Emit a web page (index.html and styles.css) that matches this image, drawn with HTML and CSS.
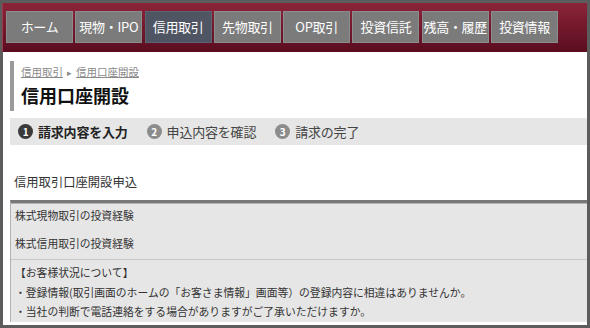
FILE: index.html
```html
<!DOCTYPE html>
<html lang="ja">
<head>
    <meta charset="UTF-8">
    <meta name="viewport" content="width=device-width, initial-scale=1.0">
    <title>信用口座開設</title>
    <link rel="stylesheet" href="styles.css">
</head>
<body>
    <div class="frame">
        <div class="header">
            <a class="tab">ホーム</a>
            <a class="tab">現物・IPO</a>
            <a class="tab active">信用取引</a>
            <a class="tab">先物取引</a>
            <a class="tab">OP取引</a>
            <a class="tab">投資信託</a>
            <a class="tab">残高・履歴</a>
            <a class="tab">投資情報</a>
        </div>

        <div class="content">
            <div class="page-title">
                <div class="crumbs">
                    <a>信用取引</a><span class="arrow">&#9656;</span><a>信用口座開設</a>
                </div>
                <h1>信用口座開設</h1>
            </div>

            <div class="steps">
                <div class="step current"><span class="num">1</span>請求内容を入力</div>
                <div class="step"><span class="num">2</span>申込内容を確認</div>
                <div class="step"><span class="num">3</span>請求の完了</div>
            </div>

            <div class="section-title">信用取引口座開設申込</div>

            <div class="form-table">
                <div class="row">株式現物取引の投資経験</div>
                <div class="row last">株式信用取引の投資経験</div>
                <div class="notice">
                    <p>【お客様状況について】</p>
                    <p>・登録情報(取引画面のホームの「お客さま情報」画面等）の登録内容に相違はありませんか。</p>
                    <p>・当社の判断で電話連絡をする場合がありますがご了承いただけますか。</p>
                </div>
            </div>
        </div>
    </div>
</body>
</html>
```
FILE: styles.css
```css
:root {
    --frame: #5c5c5c;
    --text: #333;
    --panel: #e6e6e6;
    --tab: #7b7b7b;
    --tab-active: #4f5563;
}
html, body {
    margin: 0;
    height: 100%;
}
body {
    font-family: "Noto Sans CJK JP", "Noto Sans", sans-serif;
    background: var(--frame);
    color: var(--text);
    overflow: hidden;
}
.frame {
    padding: 3px 3px 3px 2px;
    height: 100%;
    box-sizing: border-box;
    display: flex;
    flex-direction: column;
}
.header {
    display: flex;
    gap: 2.3px;
    padding: 8px 0 9px 3px;
    background: linear-gradient(#8c2439, #5a0d20);
    border-left: 1px solid #9a3a4c;
}
.tab {
    width: 67px;
    height: 32px;
    box-sizing: border-box;
    background: var(--tab);
    border: 1px solid #8d8d8d;
    color: #fff;
    font-size: 13px;
    line-height: 29px;
    text-align: center;
    white-space: nowrap;
    letter-spacing: -0.3px;
}
.tab.active {
    background: var(--tab-active);
    border-color: #5d6372;
}
.content {
    flex: 1;
    background: #fff;
    margin-left: 1px;
    padding-top: 9px;
    overflow: hidden;
}
.page-title {
    margin-left: 7px;
    border-left: 4px solid #9a9a9a;
    padding: 4px 0 4px 7px;
}
.crumbs {
    font-size: 10.5px;
    line-height: 14px;
    color: #8a8a8a;
}
.crumbs a {
    text-decoration: underline;
}
.arrow {
    font-size: 9px;
    margin: 0 4px;
}
h1 {
    margin: 3px 0 0;
    font-size: 18px;
    line-height: 24px;
    font-weight: 700;
    color: #111;
}
.steps {
    display: flex;
    gap: 19px;
    margin: 7px 0 0 7px;
    height: 27px;
    padding-left: 8px;
    background: var(--panel);
    align-items: center;
}
.step {
    display: flex;
    align-items: center;
    gap: 5px;
    font-size: 13px;
    color: #444;
    letter-spacing: -0.2px;
}
.step.current {
    font-weight: 700;
    color: #222;
}
.num {
    width: 15px;
    height: 15px;
    border-radius: 50%;
    background: #8c8c8c;
    color: #fff;
    font-size: 10px;
    font-weight: 700;
    line-height: 15px;
    text-align: center;
}
.current .num {
    background: #3a3a3a;
}
.section-title {
    margin: 29px 0 0 11px;
    font-size: 12.3px;
    line-height: 16px;
}
.form-table {
    margin: 10px 0 0 7px;
    background: var(--panel);
    border-top: 3px solid #787878;
    border-left: 1px solid #b0b0b0;
    box-shadow: inset 0 1px 0 #b4b4b4;
    font-size: 10.8px;
}
.row {
    height: 28px;
    box-sizing: border-box;
    line-height: 22px;
    padding: 1px 0 0 4px;
}
.row.last {
    height: 29px;
    border-bottom: 1px solid #c8c8c8;
}
.notice {
    padding: 3px 0 0 4px;
}
.notice p {
    margin: 0;
    line-height: 19.5px;
}
```
